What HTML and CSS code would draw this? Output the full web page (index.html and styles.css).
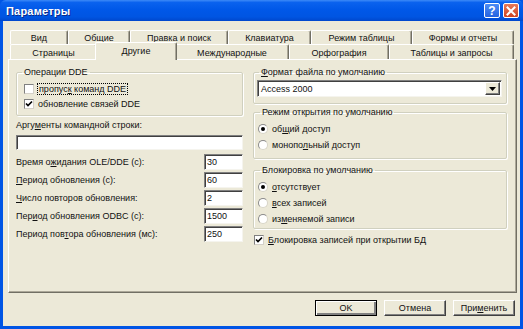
FILE: index.html
```html
<!DOCTYPE html>
<html lang="ru">
<head>
<meta charset="utf-8">
<title>Параметры</title>
<link rel="stylesheet" href="styles.css">
</head>
<body>
<div class="window">
  <div class="titlebar">
    <span class="title">Параметры</span>
    <div class="tbtns">
      <span class="tbtn help">?</span>
      <span class="tbtn close"><svg width="10" height="10" viewBox="0 0 10 10"><path d="M1.5 1.5 L8.5 8.5 M8.5 1.5 L1.5 8.5" stroke="#fff" stroke-width="2" stroke-linecap="square"/></svg></span>
    </div>
  </div>
  <div class="frame">
    <div class="tabs">
      <div class="tabrow back">
        <div class="tab w58">Вид</div>
        <div class="tab w62">Общие</div>
        <div class="tab w98">Правка и поиск</div>
        <div class="tab w83">Клавиатура</div>
        <div class="tab w101">Режим таблицы</div>
        <div class="tab w102">Формы и отчеты</div>
      </div>
      <div class="tabrow front">
        <div class="tab w87">Страницы</div>
        <div class="tab w78 selected">Другие</div>
        <div class="tab w114">Международные</div>
        <div class="tab w100">Орфография</div>
        <div class="tab w125">Таблицы и запросы</div>
      </div>
    </div>
    <div class="panel">
      <div class="col left">
        <fieldset class="group dde">
          <legend>Операции DDE</legend>
          <div class="check"><span class="box"></span><span class="focus">пропус<u>к</u> команд DDE</span></div>
          <div class="check"><span class="box"><svg width="8" height="8" viewBox="0 0 8 8"><path d="M1 3.5 L3 5.5 L7 1.5" fill="none" stroke="#000" stroke-width="1.7"/></svg></span><span>обновление связей DDE</span></div>
        </fieldset>
        <div class="arglabel">Аргу<u>м</u>енты командной строки:</div>
        <div class="textbox wide"></div>
        <div class="fields">
          <div class="field"><span>Время о<u>ж</u>идания OLE/DDE (с):</span><span class="textbox num">30</span></div>
          <div class="field"><span><u>П</u>ериод обновления (с):</span><span class="textbox num">60</span></div>
          <div class="field"><span><u>Ч</u>исло повторов обновления:</span><span class="textbox num">2</span></div>
          <div class="field"><span>Пер<u>и</u>од обновления ODBC (с):</span><span class="textbox num">1500</span></div>
          <div class="field"><span>Период пов<u>т</u>ора обновления (мс):</span><span class="textbox num">250</span></div>
        </div>
      </div>
      <div class="col right">
        <fieldset class="group fmt">
          <legend><u>Ф</u>ормат файла по умолчанию</legend>
          <div class="select"><span class="selval">Access 2000</span><span class="dropbtn"><svg width="7" height="4" viewBox="0 0 7 4"><path d="M0 0 H7 L3.5 4 Z" fill="#000"/></svg></span></div>
        </fieldset>
        <fieldset class="group mode">
          <legend>Режим открытия по умолчанию</legend>
          <div class="radio"><span class="dot on"></span><span>об<u>щ</u>ий доступ</span></div>
          <div class="radio"><span class="dot"></span><span>монопо<u>л</u>ьный доступ</span></div>
        </fieldset>
        <fieldset class="group lock">
          <legend>Блокировка по умолчанию</legend>
          <div class="radio"><span class="dot on"></span><span><u>о</u>тсутствует</span></div>
          <div class="radio"><span class="dot"></span><span><u>в</u>сех записей</span></div>
          <div class="radio"><span class="dot"></span><span>из<u>м</u>еняемой записи</span></div>
        </fieldset>
        <div class="check lockrec"><span class="box"><svg width="8" height="8" viewBox="0 0 8 8"><path d="M1 3.5 L3 5.5 L7 1.5" fill="none" stroke="#000" stroke-width="1.7"/></svg></span><span><u>Б</u>локировка записей при открытии БД</span></div>
      </div>
    </div>
    <div class="buttons">
      <div class="btn default">OK</div>
      <div class="btn">Отмена</div>
      <div class="btn">При<u>м</u>енить</div>
    </div>
  </div>
</div>
</body>
</html>
```

FILE: styles.css
```css
* { box-sizing: border-box; }
html, body { margin: 0; padding: 0; }
body {
  width: 523px;
  height: 329px;
  overflow: hidden;
  font-family: "Liberation Sans", Arial, sans-serif;
  font-size: 9px;
  color: #111;
  background: #0055e5;
}
u { text-decoration: underline; text-underline-offset: 1px; }

.window {
  width: 523px;
  height: 329px;
  display: flex;
  flex-direction: column;
}

.titlebar {
  height: 21px;
  flex: none;
  display: flex;
  align-items: center;
  justify-content: space-between;
  padding: 0 4px 0 6px;
  background: linear-gradient(#3d8af7 0, #0a62ee 12%, #0058e8 45%, #0055e2 80%, #0047cc 100%);
  border-radius: 6px 6px 0 0;
}
.title {
  color: #fff;
  font-weight: bold;
  font-size: 11px;
  letter-spacing: 0.2px;
  text-shadow: 1px 1px 0 #0a2a8a;
}
.tbtns { display: flex; gap: 3px; }
.tbtn {
  width: 16px;
  height: 15px;
  border: 1px solid #fff;
  border-radius: 2px;
  display: flex;
  align-items: center;
  justify-content: center;
  color: #fff;
  font-weight: bold;
  font-size: 12px;
}
.help { background: linear-gradient(#4c8cf5, #2563e0); }
.close { background: linear-gradient(#e77a5a, #cf4321); }

.frame {
  flex: 1;
  display: flex;
  flex-direction: column;
  background: #ece9d8;
  border: 3px solid #0055e5;
  border-top: none;
  padding: 9px 0 0 5px;
}

.tabs { padding-left: 2px; }
.tabrow { display: flex; align-items: flex-end; }
.tabrow.back { height: 14px; }
.tabrow.front { height: 15px; }
.tab {
  height: 100%;
  display: flex;
  align-items: center;
  justify-content: center;
  border-top: 1px solid #fff;
  border-left: 1px solid #fff;
  border-right: 1px solid #716f64;
  box-shadow: inset -1px 0 #aca899;
  border-radius: 2px 2px 0 0;
  background: #ece9d8;
  white-space: nowrap;
}
.front .tab { padding-top: 1px; }
.tab.selected {
  height: 18px;
  margin: 0 -2px -1px -2px;
  position: relative;
  z-index: 1;
  padding-bottom: 2px;
}
.w58 { width: 58px; }
.w62 { width: 62px; }
.w98 { width: 98px; }
.w83 { width: 83px; }
.w101 { width: 101px; }
.w102 { width: 102px; }
.w87 { width: 87px; }
.w78 { width: 78px; }
.w78.selected { width: 82px; }
.w114 { width: 114px; }
.w100 { width: 100px; }
.w125 { width: 125px; }

.panel {
  width: 509px;
  height: 234px;
  border-top: 1px solid #fff;
  border-left: 1px solid #fff;
  border-right: 1px solid #716f64;
  border-bottom: 1px solid #716f64;
  box-shadow: inset -1px -1px #aca899;
  display: flex;
  gap: 10px;
  padding: 6px 8px 0 7px;
}
.col { display: flex; flex-direction: column; }
.col.left { width: 227px; }
.col.right { width: 254px; }

.group {
  margin: 0;
  border: 1px solid #d0d0bf;
  box-shadow: 1px 1px 0 #fff inset, 1px 1px 0 #fff;
  border-radius: 2px;
  padding: 0 4px;
  min-width: 0;
}
.group legend {
  padding: 0 2px;
  margin-left: 2px;
  line-height: 13px;
  height: 13px;
}

.check, .radio {
  display: flex;
  align-items: center;
  height: 16px;
  gap: 4px;
  white-space: nowrap;
}
.box {
  width: 10px;
  height: 10px;
  flex: none;
  background: #fff;
  border: 1px solid #808080;
  border-right-color: #d4d0c8;
  border-bottom-color: #d4d0c8;
  display: flex;
  align-items: center;
  justify-content: center;
}
.focus { outline: 1px dotted #000; outline-offset: 0; padding: 0 1px; }
.dot {
  width: 10px;
  height: 10px;
  flex: none;
  border-radius: 50%;
  background: #fff;
  border: 1px solid #8a8a8a;
  border-right-color: #d8d5c8;
  border-bottom-color: #d8d5c8;
  display: flex;
  align-items: center;
  justify-content: center;
}
.dot.on::after {
  content: "";
  width: 4px;
  height: 4px;
  border-radius: 50%;
  background: #000;
}

.dde { padding: 2px 4px 3px 4px; }
.dde legend { margin-left: 1px; }
.dde .check { margin-left: 3px; }
.dde .check + .check { margin-top: -1px; }

.arglabel { margin-top: 3px; height: 13px; line-height: 13px; }
.textbox {
  background: #fff;
  border: 1px solid #808080;
  border-right-color: #f5f4ee;
  border-bottom-color: #f5f4ee;
  box-shadow: inset 1px 1px #404040;
}
.textbox.wide { height: 15px; margin-top: 3px; }
.fields { margin-top: 3px; display: flex; flex-direction: column; }
.field {
  height: 18px;
  display: flex;
  align-items: center;
  justify-content: space-between;
}
.textbox.num {
  width: 39px;
  height: 16px;
  padding-left: 2px;
  display: flex;
  align-items: center;
}

.fmt { padding: 1px 4px 6px 3px; }
.select {
  height: 17px;
  width: 245px;
  display: flex;
  align-items: center;
  justify-content: space-between;
  background: #fff;
  border: 1px solid #808080;
  border-right-color: #f5f4ee;
  border-bottom-color: #f5f4ee;
  box-shadow: inset 1px 1px #404040;
  padding: 1px 1px 1px 3px;
}
.dropbtn {
  width: 15px;
  height: 13px;
  background: #ece9d8;
  border: 1px solid #fff;
  border-right-color: #404040;
  border-bottom-color: #404040;
  box-shadow: inset -1px -1px #808080;
  display: flex;
  align-items: center;
  justify-content: center;
}
.mode { margin-top: 2px; padding: 2px 4px 5px 4px; }
.lock { margin-top: 5px; padding: 2px 4px 1px 4px; }
.lockrec { margin-top: 3px; padding-left: 1px; }

.buttons {
  display: flex;
  justify-content: flex-end;
  gap: 7px;
  padding: 7px 5px 0 0;
}
.btn {
  width: 62px;
  height: 16px;
  display: flex;
  align-items: center;
  justify-content: center;
  background: #ece9d8;
  border: 1px solid #fff;
  border-right-color: #404040;
  border-bottom-color: #404040;
  box-shadow: inset -1px -1px #808080;
}
.btn.default {
  border: 1px solid #000;
  box-shadow: inset 1px 1px #fff, inset -2px -2px #808080;
}
```
